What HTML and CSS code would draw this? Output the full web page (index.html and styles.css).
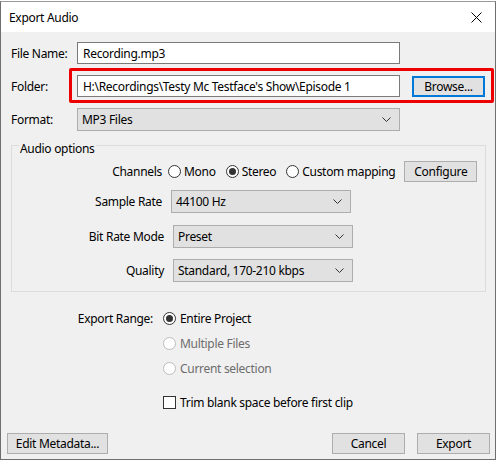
FILE: index.html
```html
<!DOCTYPE html>
<html lang="en">
<head>
<meta charset="utf-8">
<title>Export Audio</title>
<link rel="stylesheet" href="styles.css">
</head>
<body>
<div class="window">
  <div class="titlebar">
    <span class="title">Export Audio</span>
    <span class="close">
      <svg width="11" height="11" viewBox="0 0 11 11"><path d="M0.5 0.5 L10.5 10.5 M10.5 0.5 L0.5 10.5" stroke="#000" stroke-width="1" fill="none"/></svg>
    </span>
  </div>
  <div class="content">
    <div class="top-form">
      <div class="row r-file">
        <span class="lbl">File Name:</span>
        <div class="input">Recording.mp3</div>
      </div>
      <div class="row r-folder">
        <span class="lbl">Folder:</span>
        <div class="folder-field">
          <div class="input">H:\Recordings\Testy Mc Testface's Show\Episode 1</div>
          <div class="btn btn-focus">Browse...</div>
        </div>
      </div>
      <div class="row r-format">
        <span class="lbl">Format:</span>
        <div class="select w-format"><span>MP3 Files</span><svg class="chev" width="9" height="5" viewBox="0 0 9 5"><path d="M0.5 0.5 L4.5 4.5 L8.5 0.5" stroke="#333" fill="none"/></svg></div>
      </div>
    </div>

    <div class="group">
      <span class="group-label">Audio options</span>
      <div class="g-row g-channels">
        <span class="g-lbl">Channels</span>
        <span class="radio"></span><span class="opt">Mono</span>
        <span class="radio checked"></span><span class="opt">Stereo</span>
        <span class="radio"></span><span class="opt">Custom mapping</span>
        <div class="btn btn-config">Configure</div>
      </div>
      <div class="g-row g-rate">
        <span class="g-lbl">Sample Rate</span>
        <div class="select w-opt"><span>44100 Hz</span><svg class="chev" width="9" height="5" viewBox="0 0 9 5"><path d="M0.5 0.5 L4.5 4.5 L8.5 0.5" stroke="#333" fill="none"/></svg></div>
      </div>
      <div class="g-row g-mode">
        <span class="g-lbl">Bit Rate Mode</span>
        <div class="select w-opt"><span>Preset</span><svg class="chev" width="9" height="5" viewBox="0 0 9 5"><path d="M0.5 0.5 L4.5 4.5 L8.5 0.5" stroke="#333" fill="none"/></svg></div>
      </div>
      <div class="g-row g-quality">
        <span class="g-lbl">Quality</span>
        <div class="select w-opt"><span>Standard, 170-210 kbps</span><svg class="chev" width="9" height="5" viewBox="0 0 9 5"><path d="M0.5 0.5 L4.5 4.5 L8.5 0.5" stroke="#333" fill="none"/></svg></div>
      </div>
    </div>

    <div class="range">
      <div class="range-row">
        <span class="range-lbl">Export Range:</span>
        <span class="radio checked"></span><span class="opt">Entire Project</span>
      </div>
      <div class="range-row disabled">
        <span class="range-lbl"></span>
        <span class="radio"></span><span class="opt">Multiple Files</span>
      </div>
      <div class="range-row disabled">
        <span class="range-lbl"></span>
        <span class="radio"></span><span class="opt">Current selection</span>
      </div>
      <div class="range-row check-row">
        <span class="range-lbl"></span>
        <span class="checkbox"></span><span class="opt">Trim blank space before first clip</span>
      </div>
    </div>

    <div class="footer">
      <div class="btn btn-meta">Edit Metadata...</div>
      <div class="footer-right">
        <div class="btn">Cancel</div>
        <div class="btn">Export</div>
      </div>
    </div>
  </div>
</div>
</body>
</html>
```
FILE: styles.css
```css
* { box-sizing: border-box; }
html, body { margin: 0; padding: 0; }
body {
  background: #ffffff;
  font-family: "Noto Sans", "DejaVu Sans", sans-serif;
  font-size: 12px;
  letter-spacing: -0.3px;
  color: #000;
  width: 498px;
  height: 461px;
  overflow: hidden;
}
.window {
  margin-top: 1px;
  width: 496px;
  height: 459px;
  border: 1px solid #6e6e6e;
  border-top-color: #9a9a9a;
  display: flex;
  flex-direction: column;
  background: #f0f0f0;
}
.titlebar {
  height: 30px;
  background: #fff;
  display: flex;
  align-items: center;
  justify-content: space-between;
  padding: 0 9px 0 8px;
  flex: none;
}
.title { font-size: 12px; }
.close { display: flex; margin-right: 4px; }
.content {
  flex: 1;
  display: flex;
  flex-direction: column;
  padding: 10px 5px 5px 6px;
}
.top-form {
  display: flex;
  flex-direction: column;
  gap: 11px;
  padding-left: 4px;
}
.row { display: flex; align-items: center; }
.row .lbl { width: 66px; flex: none; }
.input {
  width: 323px;
  height: 22px;
  background: #fff;
  border: 1px solid #7a7a7a;
  padding: 0 5px;
  display: flex;
  align-items: center;
  white-space: nowrap;
  flex: none;
}
.folder-field {
  position: relative;
  display: flex;
  align-items: center;
  gap: 12px;
}
.folder-field::after {
  content: "";
  position: absolute;
  top: -7px;
  left: -8px;
  right: -9px;
  bottom: -6px;
  border: 3px solid #ee0000;
  border-radius: 2px;
  pointer-events: none;
}
.btn {
  width: 73px;
  height: 21px;
  background: #e1e1e1;
  border: 1px solid #adadad;
  display: flex;
  align-items: center;
  justify-content: center;
  white-space: nowrap;
  flex: none;
}
.btn-focus {
  border: 2px solid #0078d7;
  height: 21px;
}
.select {
  height: 23px;
  background: #e1e1e1;
  border: 1px solid #adadad;
  display: flex;
  align-items: center;
  justify-content: space-between;
  padding: 0 8px 0 4px;
  white-space: nowrap;
  flex: none;
}
.w-format { width: 323px; }
.w-opt { width: 180px; }
.chev { flex: none; }

.group {
  position: relative;
  margin-top: 14px;
  margin-left: 4px;
  width: 475px;
  border: 1px solid #dcdcdc;
  padding: 15px 0 9px 0;
  display: flex;
  flex-direction: column;
}
.group-label {
  position: absolute;
  top: -5px;
  left: 7px;
  padding: 0 1px;
  background: #f0f0f0;
  line-height: 16px;
}
.g-row { display: flex; align-items: center; }
.g-lbl { width: 150px; text-align: right; flex: none; }
.g-channels { height: 21px; }
.g-channels .g-lbl { margin-right: 6px; }
.g-channels .opt { margin-left: 3px; margin-right: 10px; }
.g-channels .btn-config { margin-left: -1px; }
.g-rate { margin-top: 8px; }
.g-rate .g-lbl { margin-right: 9px; }
.g-mode { margin-top: 12px; }
.g-quality { margin-top: 11px; }
.g-mode .g-lbl, .g-quality .g-lbl { width: 152px; margin-right: 9px; }

.radio {
  width: 13px;
  height: 13px;
  border: 1px solid #333;
  border-radius: 50%;
  background: #fff;
  flex: none;
  display: flex;
  align-items: center;
  justify-content: center;
}
.radio.checked::after {
  content: "";
  width: 7px;
  height: 7px;
  border-radius: 50%;
  background: #333;
}
.checkbox {
  width: 13px;
  height: 13px;
  border: 1px solid #333;
  background: #fff;
  flex: none;
}

.range {
  margin-top: 14px;
  display: flex;
  flex-direction: column;
}
.range-row {
  height: 25px;
  display: flex;
  align-items: center;
}
.range-lbl {
  width: 156px;
  flex: none;
  text-align: right;
  padding-right: 10px;
}
.range-row .opt { margin-left: 4px; }
.range-row.disabled .opt { color: #6d6d6d; }
.range-row.disabled .radio { border-color: #bcbcbc; background: #fff; }
.check-row { margin-top: 9px; }

.footer {
  margin-top: auto;
  display: flex;
  justify-content: space-between;
  align-items: center;
}
.btn-meta { width: 101px; }
.footer-right { display: flex; gap: 12px; }
```
